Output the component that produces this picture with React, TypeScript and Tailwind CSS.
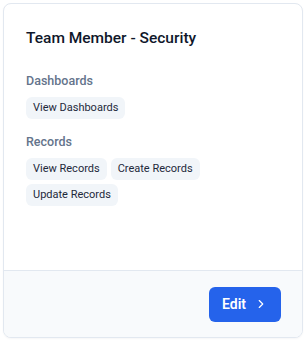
import React from 'react'
import { ChevronRight } from 'lucide-react'

// Role card: permission groups shown as chips, with an edit action in the footer
const GROUPS = [
  { title: 'Dashboards', permissions: ['View Dashboards'] },
  { title: 'Records', permissions: ['View Records', 'Create Records', 'Update Records'] },
]

export default function App() {
  return (
    <div className="p-[3px] font-['Roboto',sans-serif]">
      <div className="w-[300px] h-[335px] flex flex-col rounded-lg border border-[#e2e8f0] bg-white overflow-hidden shadow-[0_1px_2px_rgba(15,23,42,0.04)]">
        <div className="flex-1 px-[22px] pt-[22px]">
          <h2 className="text-[15.5px] leading-6 font-medium text-[#0f172a]">Team Member - Security</h2>
          <div className="mt-[21px] flex flex-col gap-[13px]">
            {GROUPS.map((group) => (
              <div key={group.title}>
                <h3 className="text-[12.5px] leading-5 font-medium text-[#64748b]">{group.title}</h3>
                <div className="mt-[6px] flex flex-wrap gap-1">
                  {group.permissions.map((p) => (
                    <span
                      key={p}
                      className="h-[22px] px-[7px] flex items-center rounded-md bg-[#f1f5f9] text-[11px] text-[#1e293b]"
                    >
                      {p}
                    </span>
                  ))}
                </div>
              </div>
            ))}
          </div>
        </div>
        <div className="h-[67px] border-t border-[#e2e8f0] bg-[#f8fafc] flex items-center justify-end px-[21px]">
          <button className="h-[35px] w-[72px] rounded-md bg-[#2563eb] text-white text-sm font-semibold flex items-center justify-center gap-2">
            Edit
            <ChevronRight size={14} strokeWidth={2} />
          </button>
        </div>
      </div>
    </div>
  )
}
